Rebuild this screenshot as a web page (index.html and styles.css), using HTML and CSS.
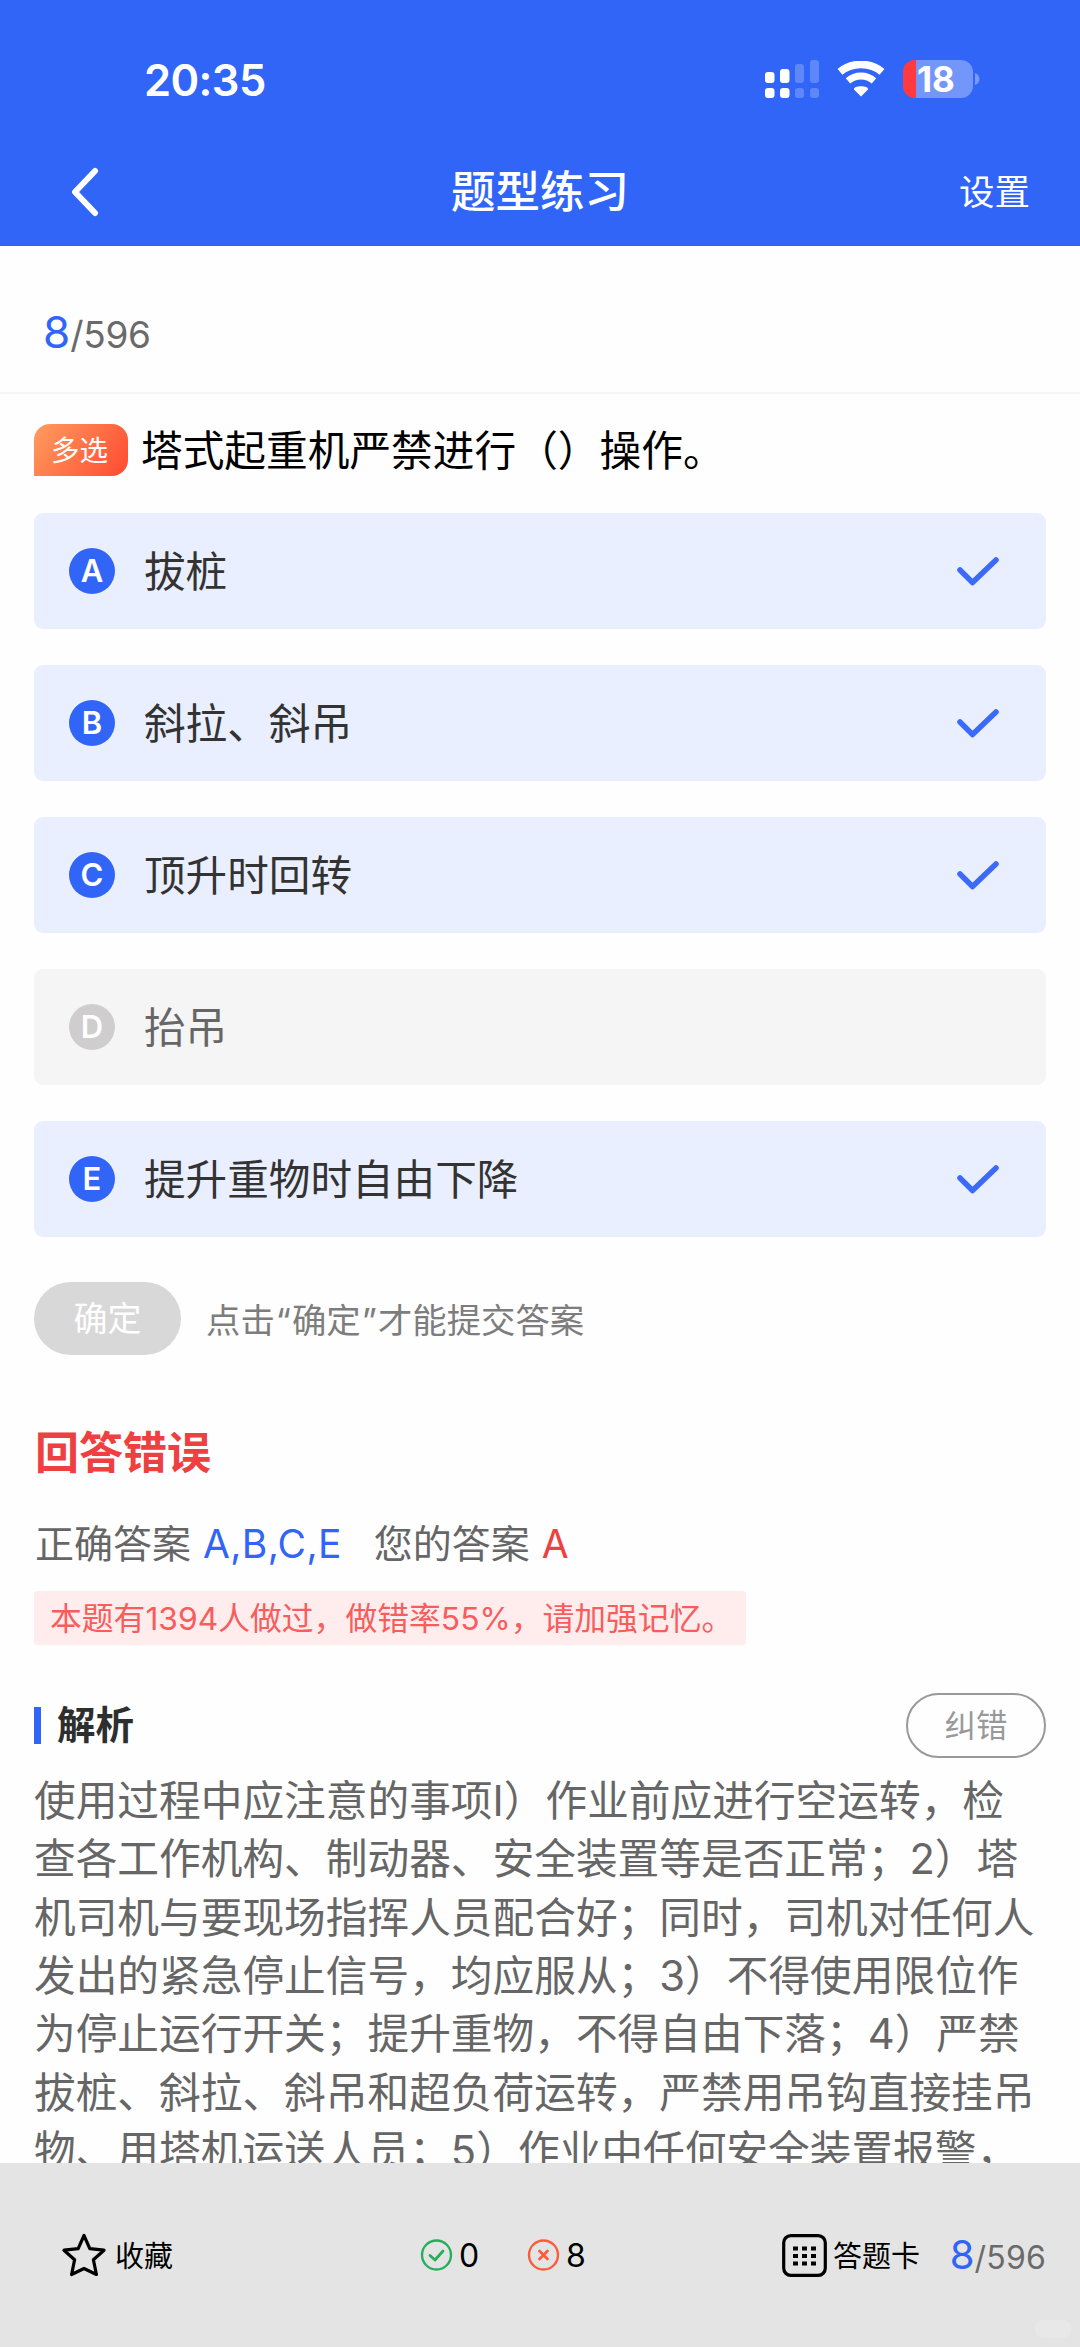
FILE: index.html
```html
<!DOCTYPE html>
<html lang="zh-CN">
<head>
<meta charset="utf-8">
<title>题型练习</title>
<link rel="stylesheet" href="styles.css">
</head>
<body>
<div class="app">
  <header class="header">
    <div class="status">
      <span class="time">20:35</span>
      <div class="status-icons">
        <svg class="signal" width="55" height="38" viewBox="0 0 55 38" fill="#fff">
          <rect x="0" y="12" width="9.5" height="11" rx="3"/>
          <rect x="15" y="9" width="9.5" height="14" rx="3"/>
          <g opacity=".22">
            <rect x="30" y="4" width="9" height="19" rx="3"/>
            <rect x="45" y="0" width="9" height="23" rx="3"/>
            <rect x="30" y="28" width="9" height="10" rx="3"/>
            <rect x="45" y="28" width="9" height="10" rx="3"/>
          </g>
          <rect x="0" y="28" width="9.5" height="10" rx="3"/>
          <rect x="15" y="28" width="9.5" height="10" rx="3"/>
        </svg>
        <svg class="wifi" width="48" height="36" viewBox="0 0 48 36" fill="none" stroke="#fff">
          <path d="M3 10.8C14.5 .9 33.500 .9 45 10.800" stroke-width="7.500"/>
          <path d="M11 19.800C18.500 13.400 29.500 13.400 37 19.800" stroke-width="7"/>
          <path d="M24 35.500L17 28.500C15.800 24 32.200 24 31 28.500Z" fill="#fff" stroke="none"/>
        </svg>
        <div class="battery"><span>18</span></div>
        <svg class="nub" width="5" height="12" viewBox="0 0 5 12"><path d="M0 0C6 2 6 10 0 12Z" fill="#fff" opacity=".35"/></svg>
      </div>
    </div>
    <nav class="nav">
      <svg class="back" width="30" height="50" viewBox="0 0 30 50" fill="none" stroke="#fff" stroke-width="6" stroke-linecap="round" stroke-linejoin="round"><path d="M25 4L5 25L25 46"/></svg>
      <h1 class="title">题型练习</h1>
      <span class="settings">设置</span>
    </nav>
  </header>

  <main class="content">
    <div class="progress"><b>8</b><span>/596</span></div>
    <div class="question"><span class="tag">多选</span><span class="question-text">塔式起重机严禁进行（）操作。</span></div>
    <ul class="options">
      <li class="option"><i class="letter">A</i><span class="label">拔桩</span><svg class="tick" width="44" height="32" viewBox="0 0 44 32"><path d="M4 15L16.500 27.500L40 5"/></svg></li>
      <li class="option"><i class="letter">B</i><span class="label">斜拉、斜吊</span><svg class="tick" width="44" height="32" viewBox="0 0 44 32"><path d="M4 15L16.500 27.500L40 5"/></svg></li>
      <li class="option"><i class="letter">C</i><span class="label">顶升时回转</span><svg class="tick" width="44" height="32" viewBox="0 0 44 32"><path d="M4 15L16.500 27.500L40 5"/></svg></li>
      <li class="option option-off"><i class="letter">D</i><span class="label">抬吊</span></li>
      <li class="option"><i class="letter">E</i><span class="label">提升重物时自由下降</span><svg class="tick" width="44" height="32" viewBox="0 0 44 32"><path d="M4 15L16.500 27.500L40 5"/></svg></li>
    </ul>
    <div class="submit"><span class="confirm">确定</span><span class="hint">点击<span class="quote">“</span>确定<span class="quote">”</span>才能提交答案</span></div>
    <h2 class="result">回答错误</h2>
    <div class="answers"><span>正确答案</span><span class="right">A,B,C,E</span><span class="yours">您的答案</span><span class="wrong">A</span></div>
    <div class="stats">本题有1394人做过，做错率55%，请加强记忆。</div>
    <div class="analysis-head"><h3>解析</h3><span class="report">纠错</span></div>
    <p class="analysis">使用过程中应注意的事项I）作业前应进行空运转，检<br>查各工作机构、制动器、安全装置等是否正常；2）塔<br>机司机与要现场指挥人员配合好；同时，司机对任何人<br>发出的紧急停止信号，均应服从；3）不得使用限位作<br>为停止运行开关；提升重物，不得自由下落；4）严禁<br>拔桩、斜拉、斜吊和超负荷运转，严禁用吊钩直接挂吊<br>物、用塔机运送人员；5）作业中任何安全装置报警，</p>
  </main>

  <footer class="footer">
    <div class="favorite">
      <svg width="44" height="44" viewBox="0 0 44 44" fill="none" stroke="#000" stroke-width="3.200" stroke-linejoin="round"><path d="M22 2.500L27.800 15.600L42 17.200L31.400 26.800L34.400 41.500L22 35.500L9.600 41.500L12.600 26.800L2 17.200L16.200 15.600Z"/></svg>
      <span>收藏</span>
    </div>
    <div class="count count-right">
      <svg width="33" height="32" viewBox="0 0 33 32" fill="none" stroke="#27ae5b"><circle cx="16.500" cy="16" r="14.500" stroke-width="2.400"/><path d="M10 16.500L15 21L23 12" stroke-width="2.800" stroke-linecap="round" stroke-linejoin="round"/></svg>
      <span>0</span>
    </div>
    <div class="count count-wrong">
      <svg width="33" height="32" viewBox="0 0 33 32" fill="none" stroke="#fb5c3c"><circle cx="16.500" cy="16" r="14.500" stroke-width="2.400"/><path d="M12.500 12L20.500 20M20.500 12L12.500 20" stroke-width="2.800" stroke-linecap="round"/></svg>
      <span>8</span>
    </div>
    <div class="card">
      <svg width="45" height="43" viewBox="0 0 45 43"><rect x="1.700" y="1.700" width="41.600" height="39.600" rx="7" fill="none" stroke="#000" stroke-width="3.200"/><path d="M11 14.500h24M11 22h24M11 29.500h24" stroke="#000" stroke-width="4" stroke-dasharray="5 4"/></svg>
      <span>答题卡</span>
    </div>
    <div class="progress progress-small"><b>8</b><span>/596</span></div>
    <div class="corner-mark"></div>
  </footer>
</div>
</body>
</html>
```
FILE: styles.css
```css
* { box-sizing: border-box; margin: 0; padding: 0; }
body {
  width: 1080px; height: 2347px; overflow: hidden; background: #fefefe;
  font-family: "Inter", "Noto Sans CJK SC", sans-serif;
  text-spacing-trim: space-all; white-space: nowrap; color: #333;
}
.app { height: 2347px; display: flex; flex-direction: column; }
.header { height: 246px; flex: none; background: #3065f8; color: #fff; }
.status { height: 138px; padding: 60px 100px 0 144px; display: flex; justify-content: space-between; align-items: flex-start; }
.time { font-size: 43.500px; font-weight: 600; line-height: 40px; letter-spacing: -.600px; }
.status-icons { display: flex; align-items: center; height: 38px; }
.wifi { margin-left: 17px; }
.battery {
  margin-left: 18px; width: 70px; height: 38px; border-radius: 12px;
  background: linear-gradient(90deg, #ff3b3f 13px, #7296fa 13px);
  font-size: 35px; font-weight: 700; line-height: 38px; padding-left: 14px; letter-spacing: 0;
}
.nub { margin-left: 2px; }
.nav { height: 108px; padding: 0 50px 0 70px; display: grid; grid-template-columns: 120px 1fr 140px; align-items: center; }
.title { font-size: 44.500px; font-weight: 500; line-height: 60px; text-align: center; }
.settings { font-size: 35.500px; line-height: 50px; text-align: right; padding-top: 2px; }

.content { flex: 1; min-height: 0; overflow: hidden; }
.progress { height: 148px; padding: 0 0 0 43px; border-bottom: 2px solid #f6f6f6; display: flex; align-items: baseline; line-height: 172px; }
.progress b { font-size: 44px; font-weight: 400; color: #3065f8; }
.progress span { font-size: 37px; color: #6a6a6a; letter-spacing: -.300px; }
.question { height: 119px; padding: 30px 34px 0; display: flex; align-items: flex-start; }
.tag {
  width: 94px; height: 52px; border-radius: 16px 16px 16px 0; flex: none;
  background: linear-gradient(125deg, #ff9c5f, #ff4a31);
  color: #fff; font-size: 28.500px; line-height: 53px; text-align: center; padding-right: 3px;
}
.question-text { font-size: 41.700px; line-height: 54px; margin-left: 13px; color: #000; }
.options { list-style: none; padding: 0 34px; display: flex; flex-direction: column; gap: 35.700px; }
.option { height: 116.200px; border-radius: 9px; background: #e9effe; padding: 0 46px 0 35px; display: flex; align-items: center; font-size: 41.600px; }
.option-off { background: #f5f5f5; color: #666; }
.label { padding-bottom: 4px; }
.letter {
  width: 46px; height: 46px; border-radius: 50%; background: #3065f8; color: #fff; margin-right: 29px;
  font: 600 31px/46px "Inter", sans-serif; text-align: center;
}
.option-off .letter { background: #cfcdce; }
.tick { margin-left: auto; fill: none; stroke: #3a6af7; stroke-width: 5.500; stroke-linecap: round; stroke-linejoin: round; }
.submit { padding: 45px 34px 0; display: flex; align-items: center; }
.confirm { width: 147px; height: 73px; border-radius: 37px; background: #d8d8d8; color: #fff; font-size: 34px; line-height: 74px; text-align: center; }
.hint { font-size: 34.400px; color: #7d7d7d; margin-left: 25px; }
.quote { padding: 0 1px; }
.result { font-size: 44px; line-height: 60px; font-weight: 700; color: #ee4041; padding: 68px 35px 0; }
.answers { display: flex; font-size: 39px; line-height: 60px; padding: 31px 35px 0; color: #666; height: 108px; }
.right { color: #3065f8; margin-left: 12px; letter-spacing: .350px; }
.yours { margin-left: 32px; }
.wrong { color: #ee4041; margin-left: 12px; }
.stats { margin-left: 34px; width: 712px; height: 54px; border-radius: 3px; background: #ffecec; color: #f75d5c; font-size: 31.800px; line-height: 55px; padding-left: 16px; }
.analysis-head { padding: 48px 34px 0; display: flex; justify-content: space-between; align-items: center; }
.analysis-head h3 { border-left: 7px solid #3065f8; padding-left: 16px; font-size: 38.500px; font-weight: 700; line-height: 37px; color: #2d2f2e; }
.report { width: 140px; height: 65px; border: 2px solid #999; border-radius: 33px; color: #999; font-size: 31.500px; line-height: 61px; text-align: center; }
.analysis { font-size: 41.700px; line-height: 58.400px; color: #666; padding: 14px 0 0 34px; }

.footer { height: 184px; flex: none; background: #e4e4e4; color: #000; padding: 0 34px 0 62px; display: flex; align-items: center; position: relative; font-size: 29px; }
.favorite, .count, .card { display: flex; align-items: center; }
.favorite span, .card span { padding-bottom: 2px; }
.favorite { width: 358px; gap: 9px; }
.count { gap: 6px; font-size: 32px; width: 107px; }
.count-wrong { width: 255px; }
.card { gap: 6px; }
.progress-small { height: 60px; line-height: 60px; border: 0; padding: 0; margin-left: auto; }
.progress-small b { font-size: 40px; }
.progress-small span { font-size: 32px; letter-spacing: .200px; }
.corner-mark { position: absolute; right: 9px; bottom: 9px; width: 36px; height: 18px; border-radius: 8px; background: #e8e8e8; }
```
